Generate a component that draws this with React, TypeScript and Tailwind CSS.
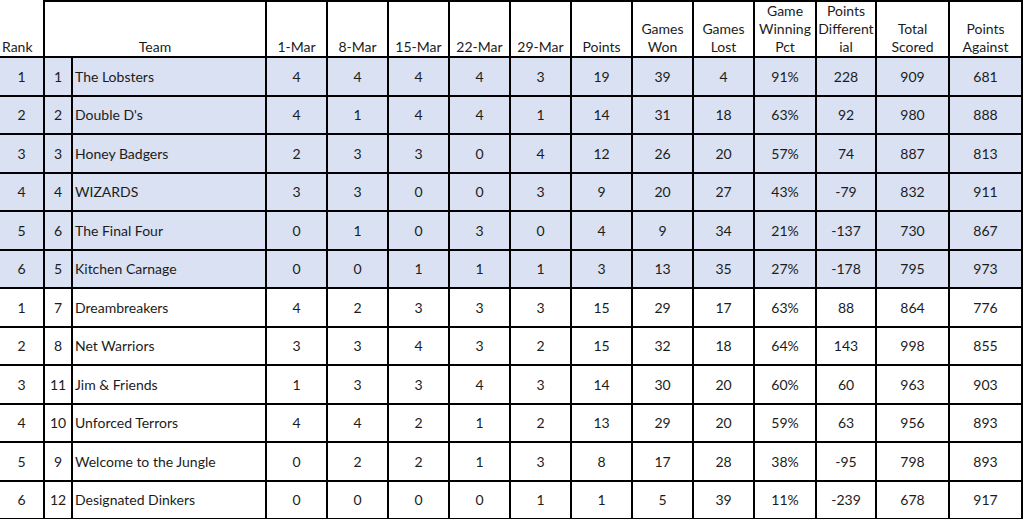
const rows: (string | number)[][] = [
  [1, 1, 'The Lobsters', 4, 4, 4, 4, 3, 19, 39, 4, '91%', 228, 909, 681],
  [2, 2, "Double D's", 4, 1, 4, 4, 1, 14, 31, 18, '63%', 92, 980, 888],
  [3, 3, 'Honey Badgers', 2, 3, 3, 0, 4, 12, 26, 20, '57%', 74, 887, 813],
  [4, 4, 'WIZARDS', 3, 3, 0, 0, 3, 9, 20, 27, '43%', -79, 832, 911],
  [5, 6, 'The Final Four', 0, 1, 0, 3, 0, 4, 9, 34, '21%', -137, 730, 867],
  [6, 5, 'Kitchen Carnage', 0, 0, 1, 1, 1, 3, 13, 35, '27%', -178, 795, 973],
  [1, 7, 'Dreambreakers', 4, 2, 3, 3, 3, 15, 29, 17, '63%', 88, 864, 776],
  [2, 8, 'Net Warriors', 3, 3, 4, 3, 2, 15, 32, 18, '64%', 143, 998, 855],
  [3, 11, 'Jim & Friends', 1, 3, 3, 4, 3, 14, 30, 20, '60%', 60, 963, 903],
  [4, 10, 'Unforced Terrors', 4, 4, 2, 1, 2, 13, 29, 20, '59%', 63, 956, 893],
  [5, 9, 'Welcome to the Jungle', 0, 2, 2, 1, 3, 8, 17, 28, '38%', -95, 798, 893],
  [6, 12, 'Designated Dinkers', 0, 0, 0, 0, 1, 1, 5, 39, '11%', -239, 678, 917],
]

const widths = [44, 28, 194, 61, 61, 61, 61, 61, 61, 61, 61, 62, 60, 73, 73]

const headers: string[][] = [
  ['1-Mar'], ['8-Mar'], ['15-Mar'], ['22-Mar'], ['29-Mar'], ['Points'],
  ['Games', 'Won'], ['Games', 'Lost'], ['Game', 'Winning', 'Pct'],
  ['Points', 'Different', 'ial'], ['Total', 'Scored'], ['Points', 'Against'],
]

export default function App() {
  return (
    <div className="w-[1024px] h-[519px] bg-white overflow-hidden text-[14px] text-[#1c1c1c]" style={{ fontFamily: 'Lato, "Liberation Sans", sans-serif' }}>
      <table className="border-collapse table-fixed w-[1022px]">
        <colgroup>
          {widths.map((w, i) => <col key={i} style={{ width: w }} />)}
        </colgroup>
        <thead>
          <tr className="h-[54.5px]">
            <th className="border-2 border-black border-l-0 border-t-0 align-bottom text-left font-normal pl-[2px] pb-0 leading-[18px]">Rank</th>
            <th colSpan={2} className="border-2 border-black align-bottom font-normal pb-0 leading-[18px]">Team</th>
            {headers.map((h, i) => (
              <th key={i} className="border-2 border-black align-bottom font-normal pb-0 leading-[18px] whitespace-nowrap">
                {h.map((line, j) => <div key={j}>{line}</div>)}
              </th>
            ))}
          </tr>
        </thead>
        <tbody>
          {rows.map((r, i) => (
            <tr key={i} className={`h-[38.5px] ${i < 6 ? 'bg-[#d9e1f2]' : 'bg-white'}`}>
              {r.map((v, j) => (
                <td
                  key={j}
                  className={`border-2 border-black p-0 ${j === 0 ? 'border-l-0 text-center' : j === 2 ? 'text-left pl-[2px]' : 'text-center'} whitespace-nowrap`}
                >
                  {v}
                </td>
              ))}
            </tr>
          ))}
        </tbody>
      </table>
    </div>
  )
}
